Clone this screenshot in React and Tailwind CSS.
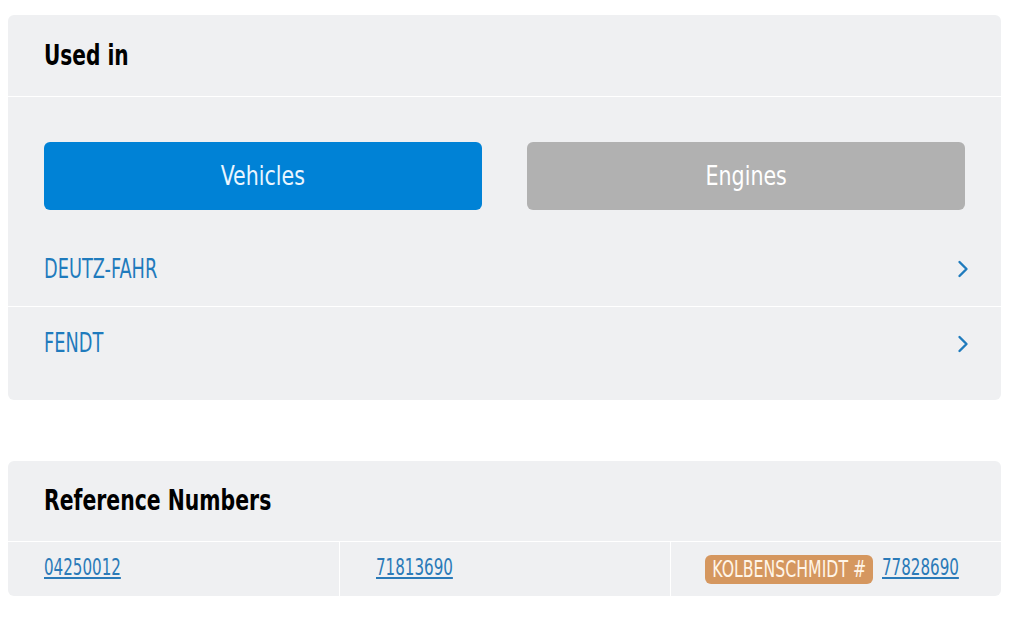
import React, { useState } from 'react';

const font = "font-['DejaVu_Sans_Condensed','DejaVu_Sans',sans-serif]";

// narrows DejaVu Condensed towards the narrower face of the reference
function Narrow({ children, className = '', origin = 'origin-left', scale = 'scale-x-[0.84]' }) {
  return <span className={`inline-block whitespace-nowrap ${scale} ${origin} ${className}`}>{children}</span>;
}

function Chevron() {
  return (
    <svg width="12" height="18" viewBox="0 0 12 18" fill="none" className="text-[#1f7bbd]">
      <path d="M2.5 2 L9.5 9 L2.5 16" stroke="currentColor" strokeWidth="2.4" strokeLinecap="round" strokeLinejoin="round" />
    </svg>
  );
}

function RefLink({ children, className = '' }) {
  return (
    <a href="#" className={`text-[23px] leading-[30px] text-[#2a7ab8] underline -mt-[4px] ${className}`}>
      <Narrow className="underline" scale="scale-x-[0.73]">{children}</Narrow>
    </a>
  );
}

export default function App() {
  const [tab, setTab] = useState('vehicles');
  const makers = ['DEUTZ-FAHR', 'FENDT'];

  return (
    <div className={`min-h-screen bg-white px-2 pt-[15px] ${font}`}>
      {/* Used in */}
      <section className="rounded-md bg-[#eff0f2] pb-[20px]">
        <div className="h-[82px] flex items-center px-9 border-b border-white">
          <h2 className="text-[28px] font-bold text-black">
            <Narrow scale="scale-x-[0.8]">Used in</Narrow>
          </h2>
        </div>
        <div className="px-9 pt-[45px] grid grid-cols-2 gap-[45px]">
          {['Vehicles', 'Engines'].map(t => (
            <button
              key={t}
              onClick={() => setTab(t.toLowerCase())}
              className={`h-[68px] rounded-md text-[26px] ${tab === t.toLowerCase() ? 'bg-[#0082d6] text-[#eaf6ff]' : 'bg-[#b1b1b1] text-white'}`}
            >
              <Narrow origin="origin-center" scale="scale-x-[0.88]">{t}</Narrow>
            </button>
          ))}
        </div>
        <ul className="mt-[22px]">
          {makers.map((m, i) => (
            <li
              key={m}
              className={`h-[74px] flex items-center justify-between pl-9 pr-[32px] ${i > 0 ? 'border-t border-white' : ''}`}
            >
              <span className="text-[26px] text-[#1f7bbd]">
                <Narrow scale="scale-x-[0.76]">{m}</Narrow>
              </span>
              <Chevron />
            </li>
          ))}
        </ul>
      </section>

      {/* Reference Numbers */}
      <section className="mt-[61px] rounded-md bg-[#eff0f2]">
        <div className="h-[81px] flex items-center px-9 border-b border-white">
          <h2 className="text-[28px] font-bold text-black">
            <Narrow scale="scale-x-[0.81]">Reference Numbers</Narrow>
          </h2>
        </div>
        <div className="grid grid-cols-3 h-[54px]">
          <div className="flex items-center px-9">
            <RefLink>04250012</RefLink>
          </div>
          <div className="flex items-center px-9 border-l border-white">
            <RefLink>71813690</RefLink>
          </div>
          <div className="flex items-center justify-end gap-[9px] pr-[42px] border-l border-white">
            <span className="rounded-md bg-[#d5975f] w-[168px] h-[29px] flex items-center justify-center text-[23px] text-[#fff5e8]">
              <Narrow origin="origin-center" scale="scale-x-[0.76]">KOLBENSCHMIDT #</Narrow>
            </span>
            <RefLink className="block w-[77px]">77828690</RefLink>
          </div>
        </div>
      </section>
    </div>
  );
}
